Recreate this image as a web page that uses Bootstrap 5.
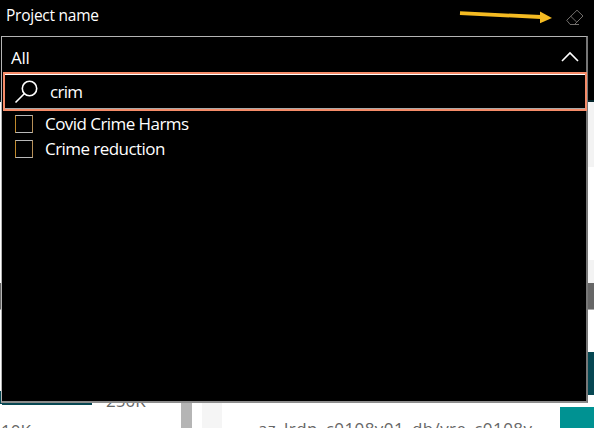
<!DOCTYPE html>
<html lang="en">
<head>
<meta charset="utf-8">
<title>Project name filter</title>
<link href="https://cdn.jsdelivr.net/npm/bootstrap@5.3.0/dist/css/bootstrap.min.css" rel="stylesheet">
<style>
body{width:594px;height:428px;font-family:"Open Sans","Noto Sans",sans-serif;background:#fff;color:#fff;line-height:1}
.report-head{height:102px;background:#000;border-bottom:2px solid #04252b}
.slicer-title{font-size:15.5px;height:32px;padding-left:6px}
.slicer-title .label{letter-spacing:-.25px}
.pointer{left:456px;top:6px}
.report-body{height:326px}
.edge-left{width:2px}
.edge-right{width:34px}
.menu-panel{left:1px;top:36px;width:587px;height:367px;background:#000;border:1px solid #b4b4b4;border-bottom:2px solid #8c8c8c;border-right:2px solid #777;z-index:2}
.menu-value{height:36px;padding:6px 6px 0 9px;font-size:17px}
.menu-value span{letter-spacing:-.3px;margin-top:-1px}
.menu-search{height:39px;margin:-1px -1px 0 1px;border:2px solid #f58b68;font-size:17px;position:relative}
.search-inner{border-top:1px solid #fff;border-bottom:1px solid #aaa;height:35px;padding-left:8px}
.query{margin-left:10px;letter-spacing:-.7px}
.option{height:25px;padding-left:13px;font-size:17px;gap:12px}
.tick{width:18px;height:18px;border:1px solid #b9b9b9;border-left-color:#c0892c;border-right-color:#b89058}
.option-text{white-space:nowrap;letter-spacing:-.55px}
.axis{color:#666;font-size:17px;white-space:nowrap}
.c-grey{background:#f3f3f3}.c-dim{background:#666;border-bottom:1px solid #aaa}.c-navy{background:#064752}.c-teal{background:#009292}
.h-a{height:65px}.h-b{height:93px}.h-c{height:23px}.h-d{height:27px}.h-e{height:42px}.h-f{height:43px}.h-g{height:12px}.h-h{height:21px}
.l-a{height:181px}.l-b{height:27px}.l-c{height:81px}.l-d{height:13px}
.scroll-bar{width:11px;background:#b5b5b5}.gutter{width:20px;margin-left:10px;background:#f5f5f5}
.plot-a{width:179px;padding-top:301px}
.bar-base{width:90px;height:2px;background:#064752}
.y-top{margin-left:14px;margin-top:-11px}
.y-low{margin-left:-1px;margin-top:13px}
.path-text{padding:318px 0 0 36px;width:338px;letter-spacing:.42px}
</style>
</head>
<body class="m-0 overflow-hidden position-relative">
<header class="report-head">
  <div class="slicer-title d-flex align-items-center"><span class="label">Project name</span></div>
</header>
<svg class="pointer position-absolute" width="130" height="26" viewBox="456 6 130 26" fill="none">
  <path d="M460 13.2 541 17" stroke="#f5bb22" stroke-width="3.8"/><path d="M540 11.5 552 18 540 23.3Z" fill="#f5bb22"/>
  <path d="M566.7 20.3 577 10.2 583 16 574.5 24.5H570.2L566.7 20.3M570.8 16.3 576.8 22.2M570 24.5H579" stroke="#726f6c" stroke-width="1"/>
</svg>
<main class="report-body d-flex overflow-hidden">
  <div class="edge-left flex-shrink-0"><div class="l-a"></div><div class="l-b c-dim"></div><div class="l-c"></div><div class="l-d c-navy"></div></div>
  <div class="plot-a flex-shrink-0">
    <div class="d-flex"><div class="bar-base"></div><div class="axis y-top">250K</div></div>
    <div class="axis y-low">10K</div>
  </div>
  <div class="scroll-bar flex-shrink-0"></div>
  <div class="gutter flex-shrink-0"></div>
  <div class="path-text axis flex-shrink-0">az_lrdp_c0108v01_db/vre_c0108v</div>
  <div class="edge-right flex-shrink-0"><div class="h-a c-grey"></div><div class="h-b"></div><div class="h-c c-grey"></div><div class="h-d c-dim"></div><div class="h-e"></div><div class="h-f c-navy"></div><div class="h-g"></div><div class="h-h c-teal"></div></div>
</main>
<section class="menu-panel position-absolute">
  <div class="menu-value d-flex justify-content-between align-items-center"><span>All</span>
    <svg width="20" height="14" viewBox="0 0 20 14" fill="none" stroke="#fff" stroke-width="1.6"><path d="M2 10 10 2l8 8"/></svg></div>
  <div class="menu-search"><div class="search-inner d-flex align-items-center">
    <svg width="27" height="26" viewBox="0 0 27 26" fill="none" stroke="#fff" stroke-width="1.6"><circle cx="16.5" cy="9.5" r="7.2"/><path d="M11.5 14.5 2.5 23.5"/></svg>
    <span class="query">crim</span></div></div>
  <div class="option d-flex align-items-center"><span class="tick"></span><span class="option-text">Covid Crime Harms</span></div>
  <div class="option d-flex align-items-center"><span class="tick"></span><span class="option-text">Crime reduction</span></div>
</section>
<script src="https://cdn.jsdelivr.net/npm/bootstrap@5.3.0/dist/js/bootstrap.bundle.min.js"></script>
</body>
</html>
